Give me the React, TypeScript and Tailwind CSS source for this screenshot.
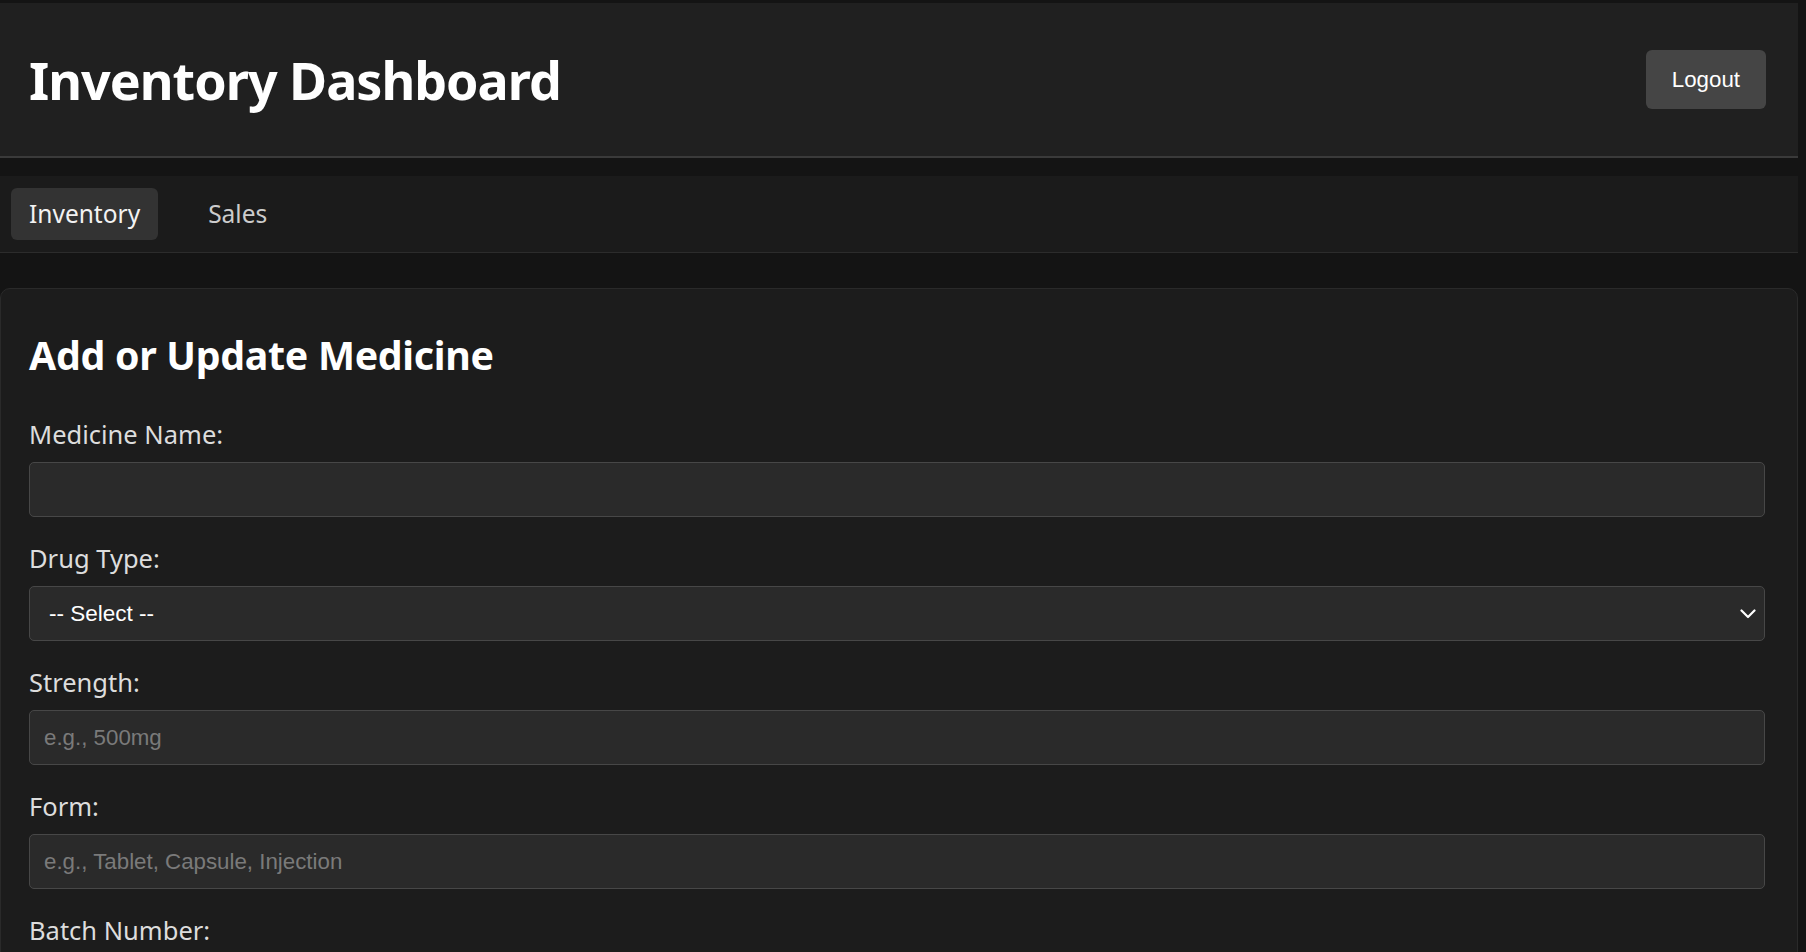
import React from "react";

const ui = "font-['Noto_Sans',sans-serif]";
const arial = "font-['Liberation_Sans',Arial,sans-serif]";

type Field = {
  id: string;
  label: string;
  placeholder?: string;
  select?: boolean;
};

const fields: Field[] = [
  { id: "name", label: "Medicine Name:" },
  { id: "type", label: "Drug Type:", select: true },
  { id: "strength", label: "Strength:", placeholder: "e.g., 500mg" },
  { id: "form", label: "Form:", placeholder: "e.g., Tablet, Capsule, Injection" },
  { id: "batch", label: "Batch Number:" },
  { id: "qty", label: "Quantity:" },
];

function Chevron() {
  return (
    <svg width="16" height="10" viewBox="0 0 16 10" fill="none" className="pointer-events-none absolute right-[9px] top-1/2 -translate-y-1/2">
      <path d="M1.5 1.5 L8 8 L14.5 1.5" stroke="#ffffff" strokeWidth="2.2" strokeLinecap="round" strokeLinejoin="round" />
    </svg>
  );
}

export default function App() {
  return (
    <div className={`min-h-screen bg-[#141414] ${ui}`}>
      <div className="mr-[8px] pt-[3px]">
        {/* header */}
        <header className="flex h-[155px] items-center justify-between border-b-2 border-[#3a3a3a] bg-[#202020] pl-[29px] pr-[32px]">
          <h1 className="text-[52px] font-bold leading-none tracking-[-1px] text-white">Inventory Dashboard</h1>
          <button className={`h-[59px] rounded-[6px] bg-[#454545] px-[26px] text-[22.3px] text-white ${arial}`}>
            Logout
          </button>
        </header>

        {/* tabs */}
        <nav className="mt-[18px] flex gap-[32px] border-b border-[#2c2c2c] bg-[#1b1b1b] pb-[12px] pl-[11px] pt-[12px]">
          <button className="h-[52px] rounded-[6px] bg-[#333333] px-[18px] text-[24.5px] text-[#f2f2f2]">Inventory</button>
          <button className="h-[52px] px-[18px] text-[24.5px] text-[#cccccc]">Sales</button>
        </nav>

        {/* card */}
        <section className="mt-[35px] rounded-t-[10px] border border-[#2a2a2a] bg-[#1c1c1c] pl-[28px] pr-[32px] pt-[39px]">
          <h2 className="text-[39.3px] font-bold leading-[54px] tracking-[-0.3px] text-white">Add or Update Medicine</h2>
          <div className="mt-[34px]">
            {fields.map((f) => (
              <div key={f.id} className="mb-[23px]">
                <label htmlFor={f.id} className="mb-[10px] block text-[25.5px] leading-[36px] text-[#dddddd]">
                  {f.label}
                </label>
                {f.select ? (
                  <div className="relative">
                    <select
                      id={f.id}
                      className={`h-[55px] w-full appearance-none rounded-[5px] border border-[#474747] bg-[#2a2a2a] pl-[19px] text-[22.5px] text-white outline-none ${arial}`}
                    >
                      <option>-- Select --</option>
                    </select>
                    <Chevron />
                  </div>
                ) : (
                  <input
                    id={f.id}
                    placeholder={f.placeholder}
                    className={`h-[55px] w-full rounded-[5px] border border-[#474747] bg-[#2a2a2a] px-[14px] text-[22.3px] text-white outline-none placeholder:text-[#7a7a7a] ${arial}`}
                  />
                )}
              </div>
            ))}
          </div>
        </section>
      </div>
    </div>
  );
}
